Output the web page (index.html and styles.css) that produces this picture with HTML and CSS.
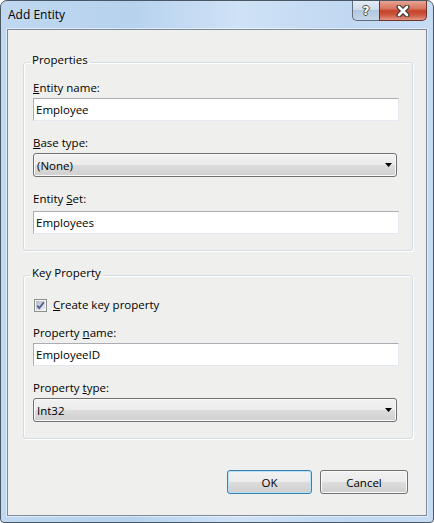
FILE: index.html
```html
<!DOCTYPE html>
<html lang="en">

<head>
    <meta charset="UTF-8">
    <title>Add Entity</title>
    <link rel="stylesheet" href="styles.css">
</head>

<body>

    <div class="window">
        <div class="titlebar">
            <span class="title">Add Entity</span>
            <div class="caption-buttons">
                <div class="cap help"><span>?</span></div>
                <div class="cap close">
                    <svg width="14" height="12" viewBox="0 0 14 12">
                        <path d="M3 2 L11 10 M11 2 L3 10" stroke="#3b3b3b" stroke-width="5" stroke-linecap="round" fill="none"/>
                        <path d="M3 2 L11 10 M11 2 L3 10" stroke="#ffffff" stroke-width="2.6" stroke-linecap="round" fill="none"/>
                    </svg>
                </div>
            </div>
        </div>

        <div class="client">
            <fieldset class="group">
                <legend>Properties</legend>
                <div class="field-label"><u>E</u>ntity name:</div>
                <div class="textbox">Employee</div>
                <div class="field-label gap"><u>B</u>ase type:</div>
                <div class="combo">
                    <span>(None)</span>
                    <svg width="7" height="4" viewBox="0 0 7 4"><polygon points="0,0 7,0 3.5,4" fill="#000"/></svg>
                </div>
                <div class="field-label gap">Entity <u>S</u>et:</div>
                <div class="textbox set">Employees</div>
            </fieldset>

            <fieldset class="group key">
                <legend>Key Property</legend>
                <div class="check-row">
                    <svg width="13" height="13" viewBox="0 0 13 13">
                        <defs>
                            <linearGradient id="chk" x1="0" y1="0" x2="1" y2="1">
                                <stop offset="0" stop-color="#b4b9c0"/>
                                <stop offset="1" stop-color="#eeeff0"/>
                            </linearGradient>
                        </defs>
                        <rect x="0.5" y="0.5" width="12" height="12" fill="#f4f4f4" stroke="#8e8f8f"/>
                        <rect x="2" y="2" width="9" height="9" fill="url(#chk)"/>
                        <path d="M3.2 6.6 L5.3 9 L9.8 3.2" stroke="#4a5f97" stroke-width="1.8" fill="none"/>
                    </svg>
                    <span><u>C</u>reate key property</span>
                </div>
                <div class="field-label gap-sm">Property <u>n</u>ame:</div>
                <div class="textbox">EmployeeID</div>
                <div class="field-label gap">Property <u>t</u>ype:</div>
                <div class="combo">
                    <span>Int32</span>
                    <svg width="7" height="4" viewBox="0 0 7 4"><polygon points="0,0 7,0 3.5,4" fill="#000"/></svg>
                </div>
            </fieldset>

            <div class="buttons">
                <div class="btn default">OK</div>
                <div class="btn cancel">Cancel</div>
            </div>
        </div>
    </div>

</body>

</html>
```

FILE: styles.css
```css
* {
    box-sizing: border-box;
}

body {
    margin: 0;
    background-color: #ffffff;
    font-family: "Open Sans", "Noto Sans", sans-serif;
    font-size: 11.5px;
    color: #000000;
}

.window {
    width: 434px;
    height: 523px;
    display: flex;
    flex-direction: column;
    padding: 0 6px 6px 6px;
    border: 1px solid #4a5866;
    border-radius: 7px 7px 4px 4px;
    background: linear-gradient(to right, #c0d8f1 0%, #b7d2ee 30%, #cfe2f6 55%, #c0d8f1 80%, #c7dcf3 100%);
}

.titlebar {
    height: 28px;
    display: flex;
    justify-content: space-between;
    align-items: flex-start;
}

.title {
    margin-left: 1px;
    padding-top: 6px;
    line-height: 16px;
    font-size: 12px;
}

.caption-buttons {
    display: flex;
}

.cap {
    height: 20px;
    display: flex;
    align-items: center;
    justify-content: center;
    border: 1px solid #5f6d7c;
    border-top: none;
}

.help {
    width: 27px;
    border-right: none;
    border-radius: 0 0 0 5px;
    background: linear-gradient(#e4ecf6 0%, #cddcec 45%, #b3c6dc 50%, #c4d5e8 100%);
}

.help span {
    font-family: "DejaVu Sans", sans-serif;
    font-weight: bold;
    font-size: 12px;
    line-height: 14px;
    color: #ffffff;
    text-shadow: -1px 0 #4d4d4d, 1px 0 #4d4d4d, 0 -1px #4d4d4d, 0 1px #4d4d4d;
}

.close {
    width: 48px;
    border-color: #6b3328;
    border-radius: 0 0 5px 0;
    background: linear-gradient(#e7a493 0%, #d8755f 40%, #c5422a 52%, #cf5a42 75%, #e29684 100%);
}

.client {
    flex: 1;
    border: 1px solid #7d8a98;
    background-color: #eff0ed;
    box-shadow: 0 0 0 1px rgba(255, 255, 255, 0.5);
}

.group {
    margin: 22px 13px 0 15px;
    padding: 8px 14px 16px 9px;
    border: 1px solid #d3dce3;
    border-radius: 3px;
    box-shadow: inset 1px 1px 0 #ffffff, 1px 1px 0 #ffffff;
    min-width: 0;
}

.group.key {
    margin-top: 14px;
    padding-top: 12px;
}

.group legend {
    margin-left: -3px;
    padding: 0 2px 4px 2px;
    line-height: 16px;
}

.field-label {
    line-height: 16px;
}

.field-label.gap {
    margin-top: 14px;
}

.field-label.gap-sm {
    margin-top: 12px;
}

.textbox {
    width: 366px;
    height: 23px;
    margin-top: 2px;
    padding: 0 2px;
    line-height: 21px;
    background-color: #ffffff;
    border: 1px solid;
    border-color: #abadb3 #e3e9ef #e3e9ef #abadb3;
}

.textbox.set {
    margin-top: 4px;
}

.combo {
    width: 364px;
    height: 24px;
    margin-top: 2px;
    padding: 0 4px 0 3px;
    display: flex;
    align-items: center;
    justify-content: space-between;
    border: 1px solid #707070;
    border-radius: 3px;
    background: linear-gradient(#f2f2f2 0%, #ebebeb 50%, #dddddd 50%, #cfcfcf 100%);
    box-shadow: inset 0 0 0 1px #fbfbfb;
}

.check-row {
    display: flex;
    align-items: center;
    gap: 6px;
    margin-left: 1px;
    line-height: 16px;
}

.buttons {
    display: flex;
    justify-content: flex-end;
    gap: 8px;
    margin: 31px 18px 0 0;
}

.btn {
    height: 24px;
    display: flex;
    align-items: center;
    justify-content: center;
    border: 1px solid #707070;
    border-radius: 3px;
    background: linear-gradient(#f2f2f2 0%, #ebebeb 50%, #dddddd 50%, #cfcfcf 100%);
    box-shadow: inset 0 0 0 1px #fbfbfb;
}

.btn.default {
    width: 85px;
    border-color: #3c7fb1;
    box-shadow: inset 0 0 0 1px #b6e3fb;
}

.btn.cancel {
    width: 88px;
}
```
